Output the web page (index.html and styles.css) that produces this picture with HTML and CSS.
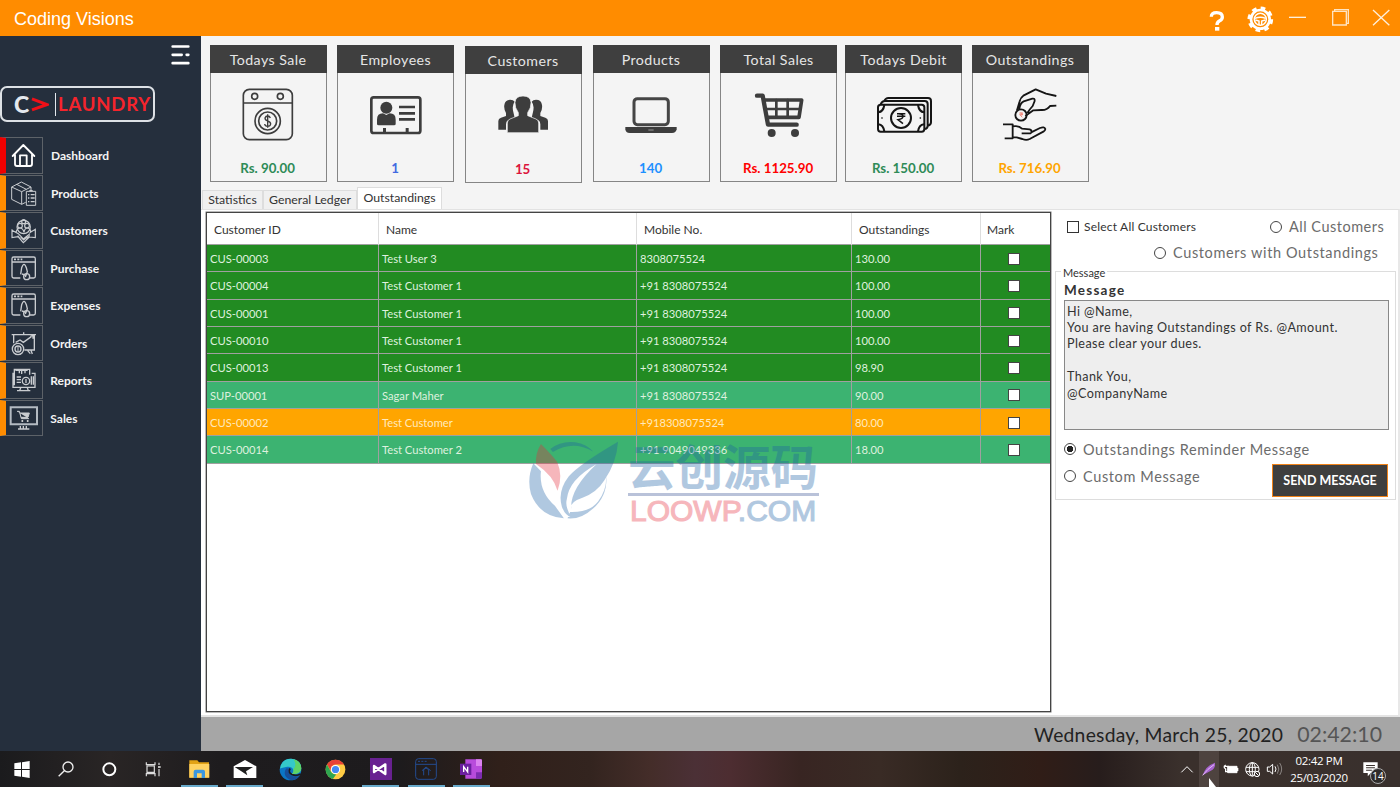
FILE: index.html
```html
<!DOCTYPE html>
<html lang="en">
<head>
<meta charset="utf-8">
<title>Coding Visions</title>
<link rel="stylesheet" href="styles.css">
</head>
<body>
<header class="titlebar">
  <div class="title">Coding Visions</div>
  <svg class="winctl" viewBox="150 0 600 108" width="200" height="36">
    <path d="M184 50q0-12 16-12q17 0 17 13q0 8-9 12q-7 4-7 12" fill="none" stroke="#fff" stroke-width="10"/>
    <path d="M195 81h13v11h-13z" fill="#fff"/>
    <circle cx="331" cy="58" r="28" fill="none" stroke="#fff" stroke-width="8"/>
    <circle cx="331" cy="58" r="34" fill="none" stroke="#fff" stroke-width="9" stroke-dasharray="14 12.700"/>
    <circle cx="331" cy="58" r="18" fill="none" stroke="#fff" stroke-width="4.500"/>
    <path d="M315 55q16-7 32 0M316 60l11 3v12M346 60l-11 3v12" fill="none" stroke="#fff" stroke-width="4.500"/>
    <path d="M417 52h51" stroke="#fff0dc" stroke-width="4"/>
    <path d="M548 34h41v41h-41zM554 34v-5h41v41h-5" fill="none" stroke="#ffe4c2" stroke-width="4"/>
    <path d="M669 30l49 46M718 30l-49 46" stroke="#fff0dc" stroke-width="4"/>
  </svg>
</header>
<div class="workspace">
  <aside class="sidebar">
    <svg class="burger" viewBox="515 130 57 65" width="19" height="22"><g stroke="#fff" stroke-width="8" stroke-linecap="round"><path d="M520 137h47M520 162h27M562 162h5M520 187h47"/></g></svg>
    <div class="logo"><span class="logo-c">C</span><svg viewBox="0 0 54 44" width="18" height="15"><path d="M3 5l45 17L3 38" fill="none" stroke="#f01018" stroke-width="9"/></svg><span class="logo-bar"></span><span class="logo-name">LAUNDRY</span></div>
    <nav class="menu">
      <a class="item current"><span class="box"><svg viewBox="20 412 108 108" width="36" height="36"><path d="M40 466l32-33l33 33M47 462v28q0 6 6 6h39q6 0 6-6v-28M62 495v-31h20v31" fill="none" stroke="#fff" stroke-width="5.500" stroke-linejoin="round" stroke-linecap="round"/></svg></span><span>Dashboard</span></a>
      <a class="item"><span class="box"><svg viewBox="20 524 108 108" width="36" height="36"><g fill="none" stroke="#c9ccd0" stroke-width="3"><path d="M37 557l29-15l29 15v12M37 557v37l30 15v-38zM67 571l28-14M52 549l29 15M67 609l12-6M81 570h28v42h-28z"/><path d="M90 568h10M86 580h4M94 580h12M86 590h4M94 590h12M86 601h4M94 601h12" stroke-width="4"/></g></svg></span><span>Products</span></a>
      <a class="item"><span class="box"><svg viewBox="17 6 108 108" width="36" height="36"><g fill="none" stroke="#c9ccd0" stroke-width="3.500"><circle cx="70" cy="48" r="20"/><circle cx="59" cy="44" r="7"/><circle cx="80" cy="44" r="7"/><circle cx="70" cy="32" r="6"/><path d="M47 64q3-13 12-13t12 13q2-13 10-13t12 13M35 55v25l18-3l16 18l18-17l18 2v-25l-17 10M35 58l19 10l15 16l20-16M52 74l14 18M88 73l-14 18M61 78l9 9l12-11"/></g></svg></span><span>Customers</span></a>
      <a class="item"><span class="box"><svg viewBox="17 118 108 108" width="36" height="36"><g fill="none" stroke="#c9ccd0" stroke-width="4"><path d="M60 199H40q-5 0-5-5v-53q0-5 5-5h60q5 0 5 5v53q0 5-5 5H88M36 151h68"/><path d="M41 143h25" stroke-width="5" stroke-dasharray="6 4"/><path d="M61 188l3-20q7-20 14 0l3 12l-6 16M65 187l13 4"/><circle cx="79" cy="195" r="9"/></g></svg></span><span>Purchase</span></a>
      <a class="item"><span class="box"><svg viewBox="17 118 108 108" width="36" height="36"><g fill="none" stroke="#c9ccd0" stroke-width="4"><path d="M60 199H40q-5 0-5-5v-53q0-5 5-5h60q5 0 5 5v53q0 5-5 5H88M36 151h68"/><path d="M41 143h25" stroke-width="5" stroke-dasharray="6 4"/><path d="M61 188l3-20q7-20 14 0l3 12l-6 16M65 187l13 4"/><circle cx="79" cy="195" r="9"/></g></svg></span><span>Expenses</span></a>
      <a class="item"><span class="box"><svg viewBox="17 346 108 108" width="36" height="36"><g fill="none" stroke="#c9ccd0" stroke-width="4"><path d="M34 372h73M70 365v7M40 374v24M102 374v44H72M46 395l13-7l10 7l24-17M90 377l8-2v9M82 420l8 9M92 419l4 11"/><circle cx="53" cy="415" r="17"/><circle cx="53" cy="415" r="9"/><path d="M53 409v12" stroke-width="3"/></g></svg></span><span>Orders</span></a>
      <a class="item"><span class="box"><svg viewBox="17 457 108 108" width="36" height="36"><g fill="none" stroke="#c9ccd0" stroke-width="4"><path d="M40 488h-2v42h66v-42h-10M42 524v-48h46v16M45 479h37M57 488v-7M64 490v-12M74 488v-10M50 540h40M61 531l-3 9M81 531l3 9M49 499h13M49 507h13M49 515h13M93 497v25M99 497v25"/><circle cx="77" cy="511" r="11"/><path d="M77 505v12"/></g></svg></span><span>Reports</span></a>
      <a class="item"><span class="box"><svg viewBox="17 570 108 108" width="36" height="36"><path d="M31 589h79v51H31z" fill="none" stroke="#b4bbc2" stroke-width="6"/><path d="M50 601h7l6 22h23M59 606h28l-4 13H63" fill="#c9ccd0" stroke="#c9ccd0" stroke-width="3"/><circle cx="66" cy="630" r="3" fill="#ddd"/><circle cx="82" cy="630" r="3" fill="#ddd"/><path d="M60 645v7M69 645v7M78 645v7M53 654h34" stroke="#c9ccd0" stroke-width="4"/></svg></span><span>Sales</span></a>
    </nav>
  </aside>
  <main class="main">
    <section class="cards">
      <article class="card"><h2>Todays Sale</h2>
        <svg viewBox="120 150 168 168" width="56" height="56"><g fill="none" stroke="#3d3d3d" stroke-width="5"><rect x="130" y="160" width="147" height="151" rx="18"/><path d="M130 201h147"/><circle cx="164" cy="181" r="9"/><circle cx="241" cy="181" r="9"/><circle cx="203" cy="255" r="38"/><circle cx="203" cy="255" r="27"/><path d="M211 246q-2-6-8-6t-8 6q0 6 8 9q9 3 9 9q-1 7-9 7t-9-7M203 235v40" stroke-width="4"/></g></svg>
        <p class="green">Rs. 90.00</p></article>
      <article class="card"><h2>Employees</h2>
        <svg viewBox="504 150 168 168" width="56" height="56"><rect x="514" y="184" width="147" height="107" rx="7" fill="none" stroke="#3d3d3d" stroke-width="8"/><g fill="#3d3d3d"><circle cx="559" cy="215" r="18"/><path d="M531 264v-13q0-19 18-19l10 5l10-5q18 0 18 19v13q0 4-5 4h-46q-5 0-5-4zM549 276h9v12h-9zM617 276h9v12h-9z"/></g><path d="M597 213h48M597 232h48M597 250h48" stroke="#3d3d3d" stroke-width="8"/></svg>
        <p class="blue">1</p></article>
      <article class="card low"><h2>Customers</h2>
        <svg viewBox="886 153 168 168" width="56" height="56"><g fill="#3d3d3d"><path d="M896 281v-26q0-8 8-10l15-5v-9q-7-12-5-24q2-16 18-16q9 0 13 6q-9 11-4 31l4 17l-20 8q-6 3-6 12v16zM1045 281v-26q0-8-8-10l-15-5v-9q7-12 5-24q-2-16-18-16q-9 0-13 6q9 11 4 31l-4 17l20 8q6 3 6 12v16z"/><path d="M923 290v-29q0-9 8-12l25-10v-9q-11-15-10-31q2-19 24-19t24 19q1 16-10 31v9l25 10q8 3 8 12v29z" stroke="#f4f4f4" stroke-width="2"/></g></svg>
        <p class="crimson">15</p></article>
      <article class="card"><h2>Products</h2>
        <svg viewBox="130 150 168 168" width="56" height="56"><rect x="163" y="188" width="103" height="78" rx="10" fill="none" stroke="#454545" stroke-width="9"/><path d="M137 273h154v7q-2 11-14 11H150q-12 0-13-11z" fill="#3d3d3d"/><path d="M206 282h16" stroke="#999" stroke-width="3"/></svg>
        <p class="sky">140</p></article>
      <article class="card"><h2>Total Sales</h2>
        <svg viewBox="512 150 168 168" width="56" height="56"><g fill="none" stroke="#3d3d3d" stroke-linejoin="round" stroke-linecap="round"><path d="M530 179h17l16 87h86" stroke-width="13"/><path d="M554 192h110l-8 52H564" stroke-width="11"/><path d="M560 219h98M588 192v48M622 192v48" stroke-width="8"/></g><circle cx="574" cy="291" r="12" fill="#3d3d3d"/><circle cx="644" cy="291" r="12" fill="#3d3d3d"/></svg>
        <p class="red">Rs. 1125.90</p></article>
      <article class="card"><h2>Todays Debit</h2>
        <svg viewBox="886 150 168 168" width="56" height="56"><g fill="none" stroke="#151515" stroke-width="6"><rect x="892" y="206" width="139" height="81" rx="8"/><path d="M900 205q4-10 12-10h120q9 0 9 9v65q0 8-8 10M911 195q4-9 12-9h119q9 0 9 9v64q0 8-9 10M893 229q15-2 18-22M1030 229q-15-2-18-22M893 265q15 2 18 21M1030 265q-15 2-18 21"/><circle cx="961" cy="246" r="30"/><path d="M949 233h25M949 241h25M954 233q13 0 13 8t-15 10l15 12" stroke-width="4.500"/></g><circle cx="904" cy="246" r="2.500"/><circle cx="1019" cy="246" r="2.500"/></svg>
        <p class="green">Rs. 150.00</p></article>
      <article class="card"><h2>Outstandings</h2>
        <svg viewBox="1268 150 168 168" width="56" height="56"><g fill="none" stroke="#151515" stroke-width="5.500" stroke-linejoin="round"><path d="M1431 180l-31-7l-31-13l-37 19q-8 5-11 17l-8 27M1431 209l-19 1q-9 13-26 12l-24 1l-24 17M1320 219q2-18 13-23l26-8q8-2 7 7l-6 15q-9 10-16 21"/><circle cx="1325" cy="237" r="17"/><path d="M1271 265h29v42h-24M1300 271q18-3 28 7l23 2q9 3 3 12h-27M1354 290l28-14q13-5 16 3q0 4-6 8l-41 22q-10 5-22 0l-17-5h-12"/></g><path d="M1320 231h11M1320 236h11M1323 231q8 0 6 5l-6 2l6 6" fill="none" stroke="#f07a6c" stroke-width="2.500"/></svg>
        <p class="amber">Rs. 716.90</p></article>
    </section>
    <div class="tabs"><span class="tab">Statistics</span><span class="tab t2">General Ledger</span><span class="tab open">Outstandings</span></div>
    <section class="panel">
      <div class="grid">
        <div class="row head"><span>Customer ID</span><span>Name</span><span>Mobile No.</span><span>Outstandings</span><span>Mark</span></div>
        <div class="row"><span>CUS-00003</span><span>Test User 3</span><span>8308075524</span><span>130.00</span><span><i class="check"></i></span></div>
        <div class="row"><span>CUS-00004</span><span>Test Customer 1</span><span>+91 8308075524</span><span>100.00</span><span><i class="check"></i></span></div>
        <div class="row"><span>CUS-00001</span><span>Test Customer 1</span><span>+91 8308075524</span><span>100.00</span><span><i class="check"></i></span></div>
        <div class="row"><span>CUS-00010</span><span>Test Customer 1</span><span>+91 8308075524</span><span>100.00</span><span><i class="check"></i></span></div>
        <div class="row"><span>CUS-00013</span><span>Test Customer 1</span><span>+91 8308075524</span><span>98.90</span><span><i class="check"></i></span></div>
        <div class="row mint"><span>SUP-00001</span><span>Sagar Maher</span><span>+91 8308075524</span><span>90.00</span><span><i class="check"></i></span></div>
        <div class="row gold"><span>CUS-00002</span><span>Test Customer</span><span>+918308075524</span><span>80.00</span><span><i class="check"></i></span></div>
        <div class="row mint"><span>CUS-00014</span><span>Test Customer 2</span><span>+91 9049049336</span><span>18.00</span><span><i class="check"></i></span></div>
      </div>
      <div class="side">
        <div class="filters"><i class="tick"></i><span class="select-all">Select All Customers</span><i class="radio"></i><span class="opt all">All Customers</span></div>
        <div class="filters second"><i class="radio"></i><span class="opt due">Customers with Outstandings</span></div>
        <div class="group">
          <span class="legend">Message</span>
          <div class="label">Message</div>
          <div class="text">Hi @Name,<br>You are having Outstandings of Rs. @Amount.<br>Please clear your dues.<br><br>Thank You,<br>@CompanyName</div>
          <div class="choice"><i class="radio on"></i><span class="opt rem">Outstandings Reminder Message</span></div>
          <div class="choice last"><i class="radio"></i><span class="opt cus">Custom Message</span><button class="send">SEND MESSAGE</button></div>
        </div>
      </div>
    </section>
    <footer class="status"><span class="date">Wednesday, March 25, 2020</span><span class="clock">02:42:10</span></footer>
  </main>
</div>
<div class="taskbar">
  <div class="start">
    <svg viewBox="0 0 132 108" width="44" height="36"><path d="M43 37l20-3v20H43zM66 34l23-4v24H66zM43 57h20v20l-20-3zM66 57h23v24l-23-4z" fill="#fff"/></svg>
    <svg viewBox="132 0 132 108" width="44" height="36"><g fill="none" stroke="#eee" stroke-width="4"><circle cx="204" cy="48" r="15"/><path d="M193 59l-17 17"/></g></svg>
    <svg viewBox="264 0 132 108" width="44" height="36"><circle cx="328" cy="55" r="18" fill="none" stroke="#fff" stroke-width="6"/></svg>
    <svg viewBox="396 0 132 108" width="44" height="36"><g fill="none" stroke="#ddd" stroke-width="3.500"><path d="M439 34v7h26v-7M439 76v-8h26v8M441 45h22v19h-22zM477 35v7M477 54v22"/><path d="M474 48h8" stroke-width="5"/></g></svg>
  </div>
  <div class="apps">
    <span class="app run"><svg viewBox="0 0 63 60" width="21" height="20"><path d="M1 4h24l5 6h30v46H1z" fill="#e2a216"/><path d="M1 15h60v41H1z" fill="#ffd262"/><path d="M14 57V38q0-6 6-6h22q6 0 6 6v19H38V43H24v14z" fill="#3c97df"/></svg></span>
    <span class="app run"><svg viewBox="0 0 72 60" width="24" height="20"><path d="M2 22L36 3l34 19v35H2z" fill="#fff"/><path d="M5 24h55L39 37l4 12L25 37z" fill="#202020"/></svg></span>
    <span class="app"><svg viewBox="0 0 68 68" width="23" height="23"><circle cx="34" cy="34" r="32" fill="#0b76c5"/><path d="M3 31Q8 2 36 2q30 3 30 29q-2 18-28 16q7-5 4-13q-5-10-18-8Q9 29 3 31z" fill="#35c9c9"/><path d="M43 4q22 6 23 27q-2 18-28 16q7-5 4-13q12-13 1-30z" fill="#5ed366"/><path d="M21 31Q9 52 32 64q20 5 31-14q-14 9-29 0q-10-8-1-20" fill="#174f99"/><path d="M33 31q-7 12 5 18q14 6 26-2" fill="none" stroke="#1d1c1c" stroke-width="5"/></svg></span>
    <span class="app"><svg viewBox="0 0 64 64" width="21" height="21"><circle cx="32" cy="32" r="30" fill="#fc4"/><path d="M6 17A30 30 0 0158 17H32A15 15 0 0019 39z" fill="#e94235"/><path d="M6 17l13 23q6 7 15 7l-10 14A30 30 0 016 17z" fill="#2fa650"/><circle cx="32" cy="32" r="14" fill="#fff"/><circle cx="32" cy="32" r="11" fill="#4388f2"/></svg></span>
    <span class="app run"><svg viewBox="0 0 66 66" width="22" height="22"><path d="M0 0h66v66H0z" fill="#682191"/><path d="M12 24l34 24V19L12 42z" fill="none" stroke="#fff" stroke-width="7" stroke-linejoin="round"/></svg></span>
    <span class="app run"><svg viewBox="0 0 66 66" width="22" height="22"><g fill="none" stroke="#234b90" stroke-width="3"><rect x="2" y="2" width="62" height="62" rx="9"/><path d="M2 19h62M26 52V35l7-5l8 5v17M21 38l12-11l14 11"/><path d="M9 10h27" stroke-dasharray="6 4"/></g></svg></span>
    <span class="app run"><svg viewBox="0 0 66 60" width="22" height="20"><path d="M16 1h46q4 0 4 4v50q0 4-4 4H16z" fill="#b84bdc"/><path d="M48 1h14q4 0 4 4v16H48z" fill="#db82f0"/><path d="M48 40h18v15q0 4-4 4H48z" fill="#7c2cb0"/><path d="M0 14h34v34H0z" fill="#6b1fa0"/><path d="M11 39V23l12 16V23" fill="none" stroke="#fff" stroke-width="4"/></svg></span>
  </div>
  <div class="tray">
    <svg viewBox="534 138 318 108" width="106" height="36"><path d="M597 138h60v108h-60z" fill="#5b504c" opacity=".6"/><path d="M544 202l17-17l17 17" fill="none" stroke="#fff" stroke-width="3"/><path d="M608 211q8-28 37-38q2 18-14 25z" fill="#a763cf"/><path d="M608 211q14-19 34-32" stroke="#e3bcfa" stroke-width="3" fill="none"/><path d="M683 184h28v19h-28z" fill="#fff" stroke="#fff" stroke-width="3"/><path d="M713 189v9M671 184h15M677 180q-9 6 0 12v8h7" stroke="#fff" stroke-width="4" fill="none"/><g fill="none" stroke="#fff" stroke-width="3"><circle cx="757" cy="193" r="20"/><ellipse cx="757" cy="193" rx="9" ry="20"/><path d="M738 187h38M738 200h28M757 173v38"/><circle cx="771" cy="207" r="8" fill="#39302d"/><path d="M766 202l10 10M802 186v13h7l9 8v-29l-9 8zM825 184q6 8 0 17"/><path d="M832 179q9 13 0 27M839 174q12 18 0 36" stroke="#8b8583"/></g><path d="M627 219v27h21z" fill="#fff"/></svg>
    <div class="time">02:42 PM<br>25/03/2020</div>
    <div class="notice"><svg viewBox="0 0 44 44" width="15" height="15"><path d="M1 1h42v31H23l-9 10V32H1z" fill="#fff"/><path d="M9 10h26M9 17h26M9 24h17" stroke="#3b332f" stroke-width="3"/></svg><span class="badge">14</span></div>
  </div>
</div>
<div class="watermark">
  <svg viewBox="80 55 280 245" width="93" height="82"><path d="M122 72q32 32 49 54q18 42 1 87q-12-46-65-81q-2-32 15-60z" fill="#e62b3c"/><path d="M354 65q-4 62-41 116q-22 36-66 53q-39 13-34 33q-4-60 76-134q-83 46-89 105q-7 24 15 56q-20-6-30-33q-14-47 21-92q30-35 148-104zM99 130l23 24q-7 61 42 104l27 38q-72-5-99-73q-13-47 7-93zM318 158q8 68-39 108q-37 34-77 30l8-19q58 2 84-32q29-37 24-87zM150 87q33-25 75-20q35 6 54 28q-60-35-121 1z" fill="#1c5fa5"/></svg>
  <div class="words"><div class="cjk">云创源码</div><div class="loowp"><b>LOOWP</b>.COM</div></div>
</div>
</body>
</html>
```
FILE: styles.css
```css
* { box-sizing: border-box; }
body { margin: 0; width: 1400px; height: 787px; overflow: hidden; position: relative; display: flex; flex-direction: column; background: #f4f4f4; font-family: Lato, "Noto Sans", sans-serif; color: #333; }
svg { display: block; flex: none; }
span, p, h2, button, .text, .title { white-space: nowrap; }

.titlebar { height: 36px; flex: none; background: #ff8c00; display: flex; justify-content: space-between; align-items: center; padding-left: 14px; }
.title { font: 18px "Liberation Sans", sans-serif; color: #fff; padding-top: 3px; }

.workspace { height: 715px; flex: none; display: flex; }
.sidebar { width: 201px; flex: none; background: #252f3d; display: flex; flex-direction: column; }
.burger { margin: 8px 0 0 171px; }
.logo { margin-top: 20px; width: 155px; height: 36px; border: 2px solid #dde1e6; border-radius: 7px; display: flex; align-items: center; padding-left: 12px; }
.logo-c { font-size: 23px; font-weight: 900; color: #e4e8ed; width: 17px; line-height: 30px; }
.logo-bar { width: 1px; height: 23px; background: #e4e8ed; margin: 0 2px 0 6px; }
.logo-name { font-size: 18.500px; font-weight: 700; color: #f5242c; letter-spacing: .8px; }
.menu { margin-top: 15px; }
.item { height: 37.5px; display: flex; align-items: flex-start; gap: 8px; color: #f4f4f4; font-size: 12px; font-weight: 700; line-height: 37.500px; }
.item:nth-child(n+3) { gap: 7.300px; }
.box { width: 43px; height: 36.5px; border: 1px solid #5d6268; border-left: 6px solid #ff8c00; }
.current .box { border-left-color: #f00000; }

.main { flex: 1; min-width: 0; display: flex; flex-direction: column; }
.cards { height: 152px; flex: none; padding: 9px 0 0 8.600px; display: grid; grid-template-columns: 127.5px 127.5px 128px 127.5px 125px 126.5px 117px; }
.card { width: 117px; height: 136.500px; border: 1px solid #858585; display: flex; flex-direction: column; align-items: center; }
.card h2 { margin: -1px -1px 0; width: 117px; height: 28px; background: #3f3f3f; color: #e6e6e6; font-size: 14.200px; font-weight: 400; line-height: 30px; text-align: center; letter-spacing: .45px; }
.card svg { margin: 13px 0 0 0; }
.card p { margin: 16px 1px 0 0; font-size: 13.300px; font-weight: 700; line-height: 20px; }
.low { margin-top: 1px; }
.green { color: #2e8b57; } .blue { color: #4169e1; } .crimson { color: #dc143c; } .sky { color: #1e90ff; } .red { color: #f00; } .amber { color: #ffa500; }

.tabs { height: 21px; flex: none; display: flex; align-items: flex-end; padding-left: 1px; font-size: 12.300px; }
.tab { width: 61px; height: 19px; border: 1px solid #ddd; border-bottom: 0; background: #f0f0f0; line-height: 17px; text-align: center; }
.t2 { width: 94px; }
.tab.open { width: 85px; height: 22px; background: #fff; line-height: 20px; }

.panel { height: 508px; flex: none; background: #fff; border-top: 1px solid #e2e2e2; border-right: 2px solid #e8e8e8; border-bottom: 2px solid #e4e4e4; display: flex; padding: 2px 0 0 5px; }
.grid { width: 845px; height: 500px; border: 1px solid #444; box-shadow: 0 0 0 .5px #777; flex: none; background: #fff; }
.row { display: grid; grid-template-columns: 172px 258px 215px 129px 1fr; height: 27.350px; background: #228b22; color: #dff1df; font-size: 11.200px; line-height: 27px; border-bottom: 1px solid #a0a0a0; }
.row > span { height: 100%; padding-left: 3px; border-right: 1px solid #a0a0a0; }
.row > span:last-child { border-right: 0; }
.mint { background: #3cb371; }
.gold { background: #ffa500; color: #ffe9bd; }
.row.head { height: 32px; background: #fff; color: #333; font-size: 12px; line-height: 33px; }
.head > span { padding-left: 7.500px; border-right-color: #ddd; }
.row.head > span { padding-left: 7px; }
.row.head > span:last-child { padding-left: 6px; }
.check { display: block; margin: 7.500px 0 0 24px; width: 12px; height: 12px; background: #fff; border: 1px solid #444; }

.side { flex: 1; padding: 2px 3px 0 4px; }
.filters { height: 25px; display: flex; align-items: center; padding-left: 12px; }
.tick { width: 12px; height: 12px; border: 1px solid #333; background: #fff; margin-right: 5px; }
.select-all { font-size: 12px; width: 186px; letter-spacing: .2px; }
.radio { width: 12px; height: 12px; flex: none; border: 1px solid #444; border-radius: 50%; background: #fff; margin-right: 7px; }
.radio.on { background: radial-gradient(circle, #222 0 3px, #fff 3.500px); }
.opt { font-size: 14.500px; color: #6c6c6c; letter-spacing: .62px; }
.all { letter-spacing: .5px; }
.second { height: 27px; padding-left: 99px; }
.group { position: relative; height: 229px; margin-top: 5px; border: 1px solid #ddd; padding: 8px 6px 0 8px; }
.legend { position: absolute; left: 5px; top: -6px; padding: 0 2px; background: #fff; font-size: 11px; line-height: 13px; }
.label { font-size: 13.500px; font-weight: 700; line-height: 20px; height: 20px; letter-spacing: 1.250px; }
.text { width: 325px; height: 130px; border: 1px solid #888; background: #eee; font-size: 12.600px; line-height: 16.400px; padding: 2.500px 2px; letter-spacing: .42px; }
.choice { height: 26px; margin-top: 6px; display: flex; align-items: center; }
.choice.last { height: 34px; margin-top: 1px; align-items: flex-start; }
.choice.last .radio { margin-top: 7px; }
.cus { flex: 1; line-height: 27px; }
.send { width: 116px; height: 33px; margin: 1px 1px 0 0; padding: 0; background: #3f3f3f; border: 1px solid #f08218; color: #fff; font: 700 12.500px Lato, sans-serif; }

.status { height: 34px; flex: none; background: #a6a6a6; display: flex; justify-content: flex-end; align-items: center; gap: 14px; padding-right: 18px; }
.date { font-size: 19.300px; color: #222; letter-spacing: .25px; }
.clock { font-size: 21.300px; color: #555; }

.taskbar { height: 36px; flex: none; background: linear-gradient(90deg, #1b1b1d 0, #292525 110px, #1e1c1e 220px, #1d1b1d 400px, #30201a 500px, #33241f 590px, #442d29 650px, #4b3036 695px, #4d2d31 730px, #382522 800px, #392b25 880px, #2c221b 960px, #301d17 1040px, #271d1c 1100px, #3a302c 1180px, #39302d 1400px); display: flex; }
.start { display: flex; width: 177px; }
.apps { display: flex; flex: 1; }
.app { width: 45.300px; height: 36px; display: flex; align-items: center; justify-content: center; }
.run { background: linear-gradient(#68aacb, #68aacb) center bottom / 37px 2px no-repeat; }
.tray { display: flex; width: 222px; color: #fff; }
.time { width: 70px; font: 11.500px/16.500px "Open Sans", sans-serif; text-align: center; padding-top: 2px; letter-spacing: -.35px; }
.notice { position: relative; padding: 11px 0 0 9px; }
.badge { position: absolute; left: 16px; top: 17px; width: 16px; height: 16px; border-radius: 50%; background: #2e2b2a; border: 1px solid #aaa; font: 10px/14px "Open Sans", sans-serif; text-align: center; }

.watermark { position: absolute; left: 527px; top: 438px; display: flex; opacity: .34; gap: 8px; }
.cjk { width: 191px; height: 58px; white-space: nowrap; border-bottom: 3px solid #345092; font: 700 47.500px/54px "Noto Sans CJK SC", sans-serif; color: #1c5fa5; }
.loowp { font: 30px/30px "Liberation Sans", sans-serif; color: #1c5fa5; padding-left: 2px; -webkit-text-stroke: 1.200px currentColor; }
.loowp b { font-weight: 400; color: #e62b3c; }
```
